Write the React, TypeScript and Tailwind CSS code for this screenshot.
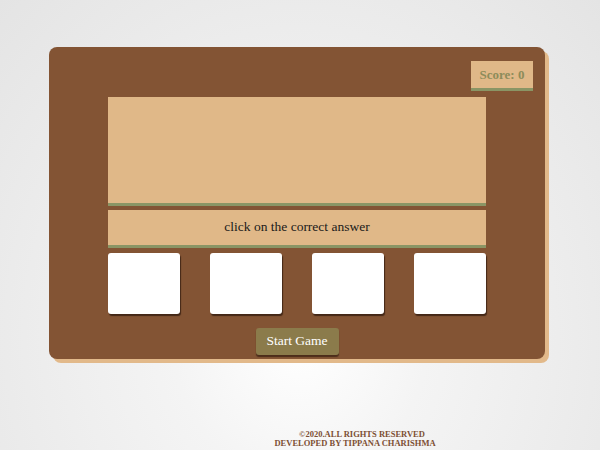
import React from "react";

export default function App() {
  const serif = { fontFamily: '"Liberation Serif", "Times New Roman", serif' };
  return (
    <div
      className="w-[600px] h-[450px] overflow-hidden bg-[radial-gradient(ellipse_at_50%_75%,#ffffff_0%,#f4f4f4_30%,#e4e4e4_100%)]"
      style={serif}
    >
      <div className="pt-[47px] pl-[49px]">
        <div className="w-[496px] h-[312px] rounded-[8px] bg-[#835434] shadow-[4px_4px_0_#e2b98a] flex flex-col">
          <div className="flex justify-end pt-[14px] pr-[12px]">
            <div className="w-[62px] h-[30px] bg-[#e0b888] border-b-[3px] border-[#8a9565] flex items-center justify-center text-[13px] font-bold text-[#8d8c5a]">
              Score: 0
            </div>
          </div>
          <div className="mx-[59px] mt-[6px] flex flex-col">
            <div className="h-[109px] bg-[#e0b888] border-b-[3px] border-[#8a9565]" />
            <div className="mt-[4px] h-[38px] bg-[#e0b888] border-b-[3px] border-[#8a9565] flex items-center justify-center text-[13.5px] text-[#1a1a1a]">
              click on the correct answer
            </div>
            <div className="mt-[5px] flex justify-between">
              {[0, 1, 2, 3].map((i) => (
                <div
                  key={i}
                  className="w-[72px] h-[61px] bg-white rounded-[3px] shadow-[1px_2px_1px_rgba(40,20,10,0.7)]"
                />
              ))}
            </div>
            <div className="mt-[14px] flex justify-center">
              <div className="w-[83px] h-[27px] bg-[#8b7b4b] rounded-[3px] shadow-[0_2px_1px_rgba(40,20,10,0.6)] flex items-center justify-center text-[13.5px] text-white">
                Start Game
              </div>
            </div>
          </div>
        </div>
      </div>
      <div className="mt-[71px] flex flex-col items-center text-[8.5px] leading-[9px] font-bold text-[#7d4f33] pl-[110px]">
        <div className="pl-[14px]">©2020.ALL RIGHTS RESERVED</div>
        <div>DEVELOPED BY TIPPANA CHARISHMA</div>
      </div>
    </div>
  );
}
